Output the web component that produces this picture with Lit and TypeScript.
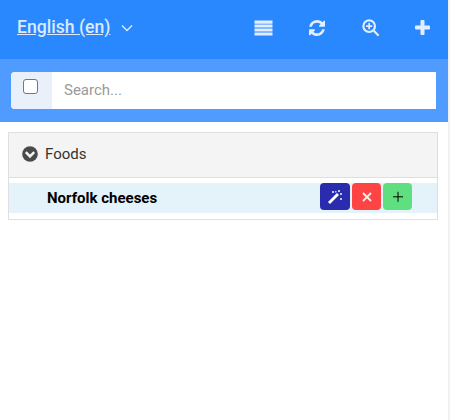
import { LitElement, html, css } from "lit";
import { customElement } from "lit/decorators.js";

@customElement("app-root")
export class AppRoot extends LitElement {
  static styles = css`
    :host { display: flex; width: 450px; height: 420px; font-family: Roboto, "Liberation Sans", sans-serif; background: #fff; }
    * { box-sizing: border-box; }
    .main { width: 448px; height: 420px; flex: none; }
    .strip { width: 2px; height: 420px; flex: none; background: #f1f1f1; }
    .top { height: 59px; background: #2a88ff; display: flex; align-items: center; padding: 0 18px 4px 17px; }
    .lang { color: #dbeaff; font-size: 17.6px; font-weight: 500; text-decoration: underline; line-height: 21px; width: 93px; white-space: nowrap; }
    .caret { margin-left: 11px; width: 12px; height: 8px; display: block; }
    .icons { margin-left: auto; display: flex; align-items: center; }
    .icons svg { display: block; fill: #e2eeff; }
    .i1 { width: 19px; height: 16px; margin-right: 36px; }
    .i2 { width: 16px; height: 16px; margin-right: 37px; }
    .i3 { width: 17px; height: 17px; margin-right: 36px; }
    .i4 { width: 15px; height: 15px; }
    .search { height: 63px; background: #4f9bff; padding: 13px 12px 13px 11px; }
    .group { height: 37px; display: flex; background: #fff; border-radius: 4px 0 0 4px; overflow: hidden; }
    .addon { width: 41px; background: #e9f0fa; padding: 7px 0 0 12px; }
    .box { display: block; width: 15px; height: 15px; border: 1.5px solid #767676; border-radius: 3px; background: #fff; }
    .ph { padding-left: 12px; font-size: 15px; line-height: 37px; color: #9a9a9a; }
    .panel { margin: 10px 10px 0 8px; height: 88px; border: 1px solid #dfdfe3; }
    .head { height: 45px; background: #f4f4f4; border-bottom: 1px solid #dfdfe3; display: flex; align-items: center; padding: 0 0 2px 13px; gap: 7px; font-size: 15px; color: #333; }
    .head svg { width: 16px; height: 16px; display: block; }
    .row { margin-top: 5px; height: 30px; background: #e4f2f9; display: flex; padding-left: 38px; }
    .name { font-size: 15px; font-weight: 700; color: #000; line-height: 30px; }
    .btns { margin-left: auto; margin-right: 25px; display: flex; gap: 2px; height: 27px; }
    .btn { width: 29px; height: 27px; border-radius: 4px; display: flex; align-items: center; justify-content: center; }
    .wand { width: 30px; background: #2b2bae; }
    .del { background: #ff4444; }
    .add { background: #5fdf7f; }
    .btn svg { display: block; width: 14px; height: 14px; }
  `;

  render() {
    return html`
      <div class="main">
      <div class="top">
        <span class="lang">English (en)</span>
        <svg class="caret" viewBox="0 0 12 8"><path d="M1 1.500 6 6.500l5-5" fill="none" stroke="#dbeaff" stroke-width="1.500"/></svg>
        <div class="icons">
          <svg class="i1" viewBox="0 0 19 16"><path d="M0.500 0.500h18v3.200H0.500zM0.500 4.600h18v3H0.500zM0.500 8.500h18v3H0.500zM0.500 12.400h18v3.200H0.500z"/></svg>
          <svg class="i2" viewBox="0 0 1536 1536"><path d="M1511 928q0 5-1 7-64 268-268 434.500T764 1536q-146 0-282.500-55T238 1324l-129 129q-19 19-45 19t-45-19-19-45V960q0-26 19-45t45-19h448q26 0 45 19t19 45-19 45L420 1142q71 66 161 102t187 36q134 0 250-65t186-179q11-17 53-117 8-23 30-23h192q13 0 22.500 9.500T1511 928zm25-800v448q0 26-19 45t-45 19h-448q-26 0-45-19t-19-45 19-45l138-138Q969 256 768 256q-134 0-250 65T332 500q-11 17-53 117-8 23-30 23H50q-13 0-22.500-9.500T18 608v-7q65-268 270-434.500T768 0q146 0 284 55.500T1297 212l130-129q19-19 45-19t45 19 19 45z"/></svg>
          <svg class="i3" viewBox="0 0 19 19"><circle cx="8" cy="8" r="6.500" fill="none" stroke="#e2eeff" stroke-width="2.400"/><path d="M4.500 7h2.500V4.500h2V7h2.500v2H9v2.500H7V9H4.500z"/><path d="m12.300 14 1.700-1.700 4.700 4.700a1 1 0 0 1-1.700 1.700z"/></svg>
          <svg class="i4" viewBox="0 0 15 15"><path d="M5.500 1a1 1 0 0 1 1-1h2a1 1 0 0 1 1 1v4.500H14a1 1 0 0 1 1 1v2a1 1 0 0 1-1 1H9.500V14a1 1 0 0 1-1 1h-2a1 1 0 0 1-1-1V9.500H1a1 1 0 0 1-1-1v-2a1 1 0 0 1 1-1h4.500z"/></svg>
        </div>
      </div>
      <div class="search">
        <div class="group">
          <div class="addon"><span class="box"></span></div>
          <div class="ph">Search...</div>
        </div>
      </div>
      <div class="panel">
        <div class="head">
          <svg viewBox="0 0 16 16"><circle cx="8" cy="8" r="7.800" fill="#4a4a4a"/><path d="M3.800 6.200 8 10.400l4.200-4.200" fill="none" stroke="#f4f4f4" stroke-width="2.600"/></svg>
          <span>Foods</span>
        </div>
        <div class="row">
          <span class="name">Norfolk cheeses</span>
          <div class="btns">
            <div class="btn wand"><svg viewBox="0 0 14 14"><path d="M0 12 9 3l2 2-9 9z" fill="#fff"/><path d="M4 1h2v2H4zM10 0h2v2h-2zM12 3h2v2h-2zM12 8h2v2h-2zM7 1h1.500v1.500H7z" fill="#a8d0ff"/></svg></div>
            <div class="btn del"><svg viewBox="0 0 14 14"><path d="M3 3l8 8M11 3l-8 8" stroke="#ffecec" stroke-width="1.800" fill="none"/></svg></div>
            <div class="btn add"><svg viewBox="0 0 14 14"><path d="M7 1.800v10M2 6.800h10" stroke="#000" stroke-width="1" fill="none"/></svg></div>
          </div>
        </div>
      </div>
      </div>
      <div class="strip"></div>
    `;
  }
}
